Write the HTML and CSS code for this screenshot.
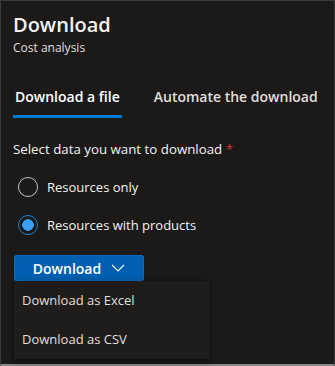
FILE: index.html
```html
<!DOCTYPE html>
<html lang="en">

<head>
    <meta charset="UTF-8">
    <title>Download</title>
    <link rel="stylesheet" href="styles.css">
</head>

<body>
    <div class="panel">
        <h1>Download</h1>
        <p class="sub">Cost analysis</p>

        <nav class="tabs">
            <span class="tab valgt">Download a file</span>
            <span class="tab">Automate the download</span>
        </nav>

        <p class="label">Select data you want to download <span class="req">*</span></p>

        <div class="radio">
            <span class="dot"></span>
            <span>Resources only</span>
        </div>
        <div class="radio on">
            <span class="dot"></span>
            <span>Resources with products</span>
        </div>

        <div class="dl">
            <button class="knap">Download
                <svg width="14" height="8" viewBox="0 0 14 8"><path d="M1 1l6 6 6-6" fill="none" stroke="#fff" stroke-width="1.1"/></svg>
            </button>
            <div class="menu">
                <div class="item">Download as Excel</div>
                <div class="item">Download as CSV</div>
            </div>
        </div>
    </div>
</body>

</html>
```

FILE: styles.css
```css
html, body {
    margin: 0;
    padding: 0;
}

body {
    background-color: #1b1a19;
    font-family: "Open Sans", "Noto Sans", sans-serif;
    color: #f3f2f1;
}

.panel {
    width: 335px;
    height: 366px;
    box-sizing: border-box;
    border: 1px solid #3b3a39;
    border-bottom: 2px solid #8a8886;
    padding: 9px 12px 0 12px;
}

h1 {
    margin: 0;
    font-size: 20px;
    font-weight: 600;
    line-height: 30px;
}

.sub {
    margin: 0;
    font-size: 12px;
    line-height: 16px;
    color: #e1dfdd;
}

.tabs {
    display: flex;
    gap: 30px;
    margin-top: 29px;
}

.tab {
    font-size: 14px;
    font-weight: 600;
    line-height: 24px;
    padding: 0 2px 6px 2px;
    color: #e1dfdd;
}

.tab.valgt {
    color: #fff;
    border-bottom: 3px solid #0078d4;
}

.label {
    margin: 21px 0 0 0;
    font-size: 13.3px;
    line-height: 20px;
}

.req {
    color: #d13438;
}

.radio {
    display: flex;
    align-items: center;
    gap: 9px;
    font-size: 13px;
    margin-top: 18px;
    padding-left: 5px;
}

.radio + .radio {
    margin-top: 18px;
}

.dot {
    width: 20px;
    height: 20px;
    border: 1.5px solid #c8c6c4;
    border-radius: 50%;
    box-sizing: border-box;
}

.radio.on .dot {
    border-color: #1a86d9;
    background: radial-gradient(circle, #3aa0f3 5.5px, transparent 6px);
}

.dl {
    margin-top: 20px;
}

.knap {
    display: flex;
    align-items: center;
    justify-content: center;
    gap: 10px;
    width: 130px;
    height: 26px;
    background-color: #005fb0;
    color: #fff;
    border: 1px solid #0a6cc0;
    border-radius: 2px;
    font-family: inherit;
    font-size: 14px;
    font-weight: 600;
    margin-left: 1px;
}

.menu {
    width: 195px;
    background-color: #1e1d1c;
    box-shadow: 0 2px 6px rgba(0, 0, 0, .6);
    margin-left: 1px;
}

.item {
    font-size: 13px;
    line-height: 39px;
    padding-left: 8px;
    color: #e1dfdd;
}
```
